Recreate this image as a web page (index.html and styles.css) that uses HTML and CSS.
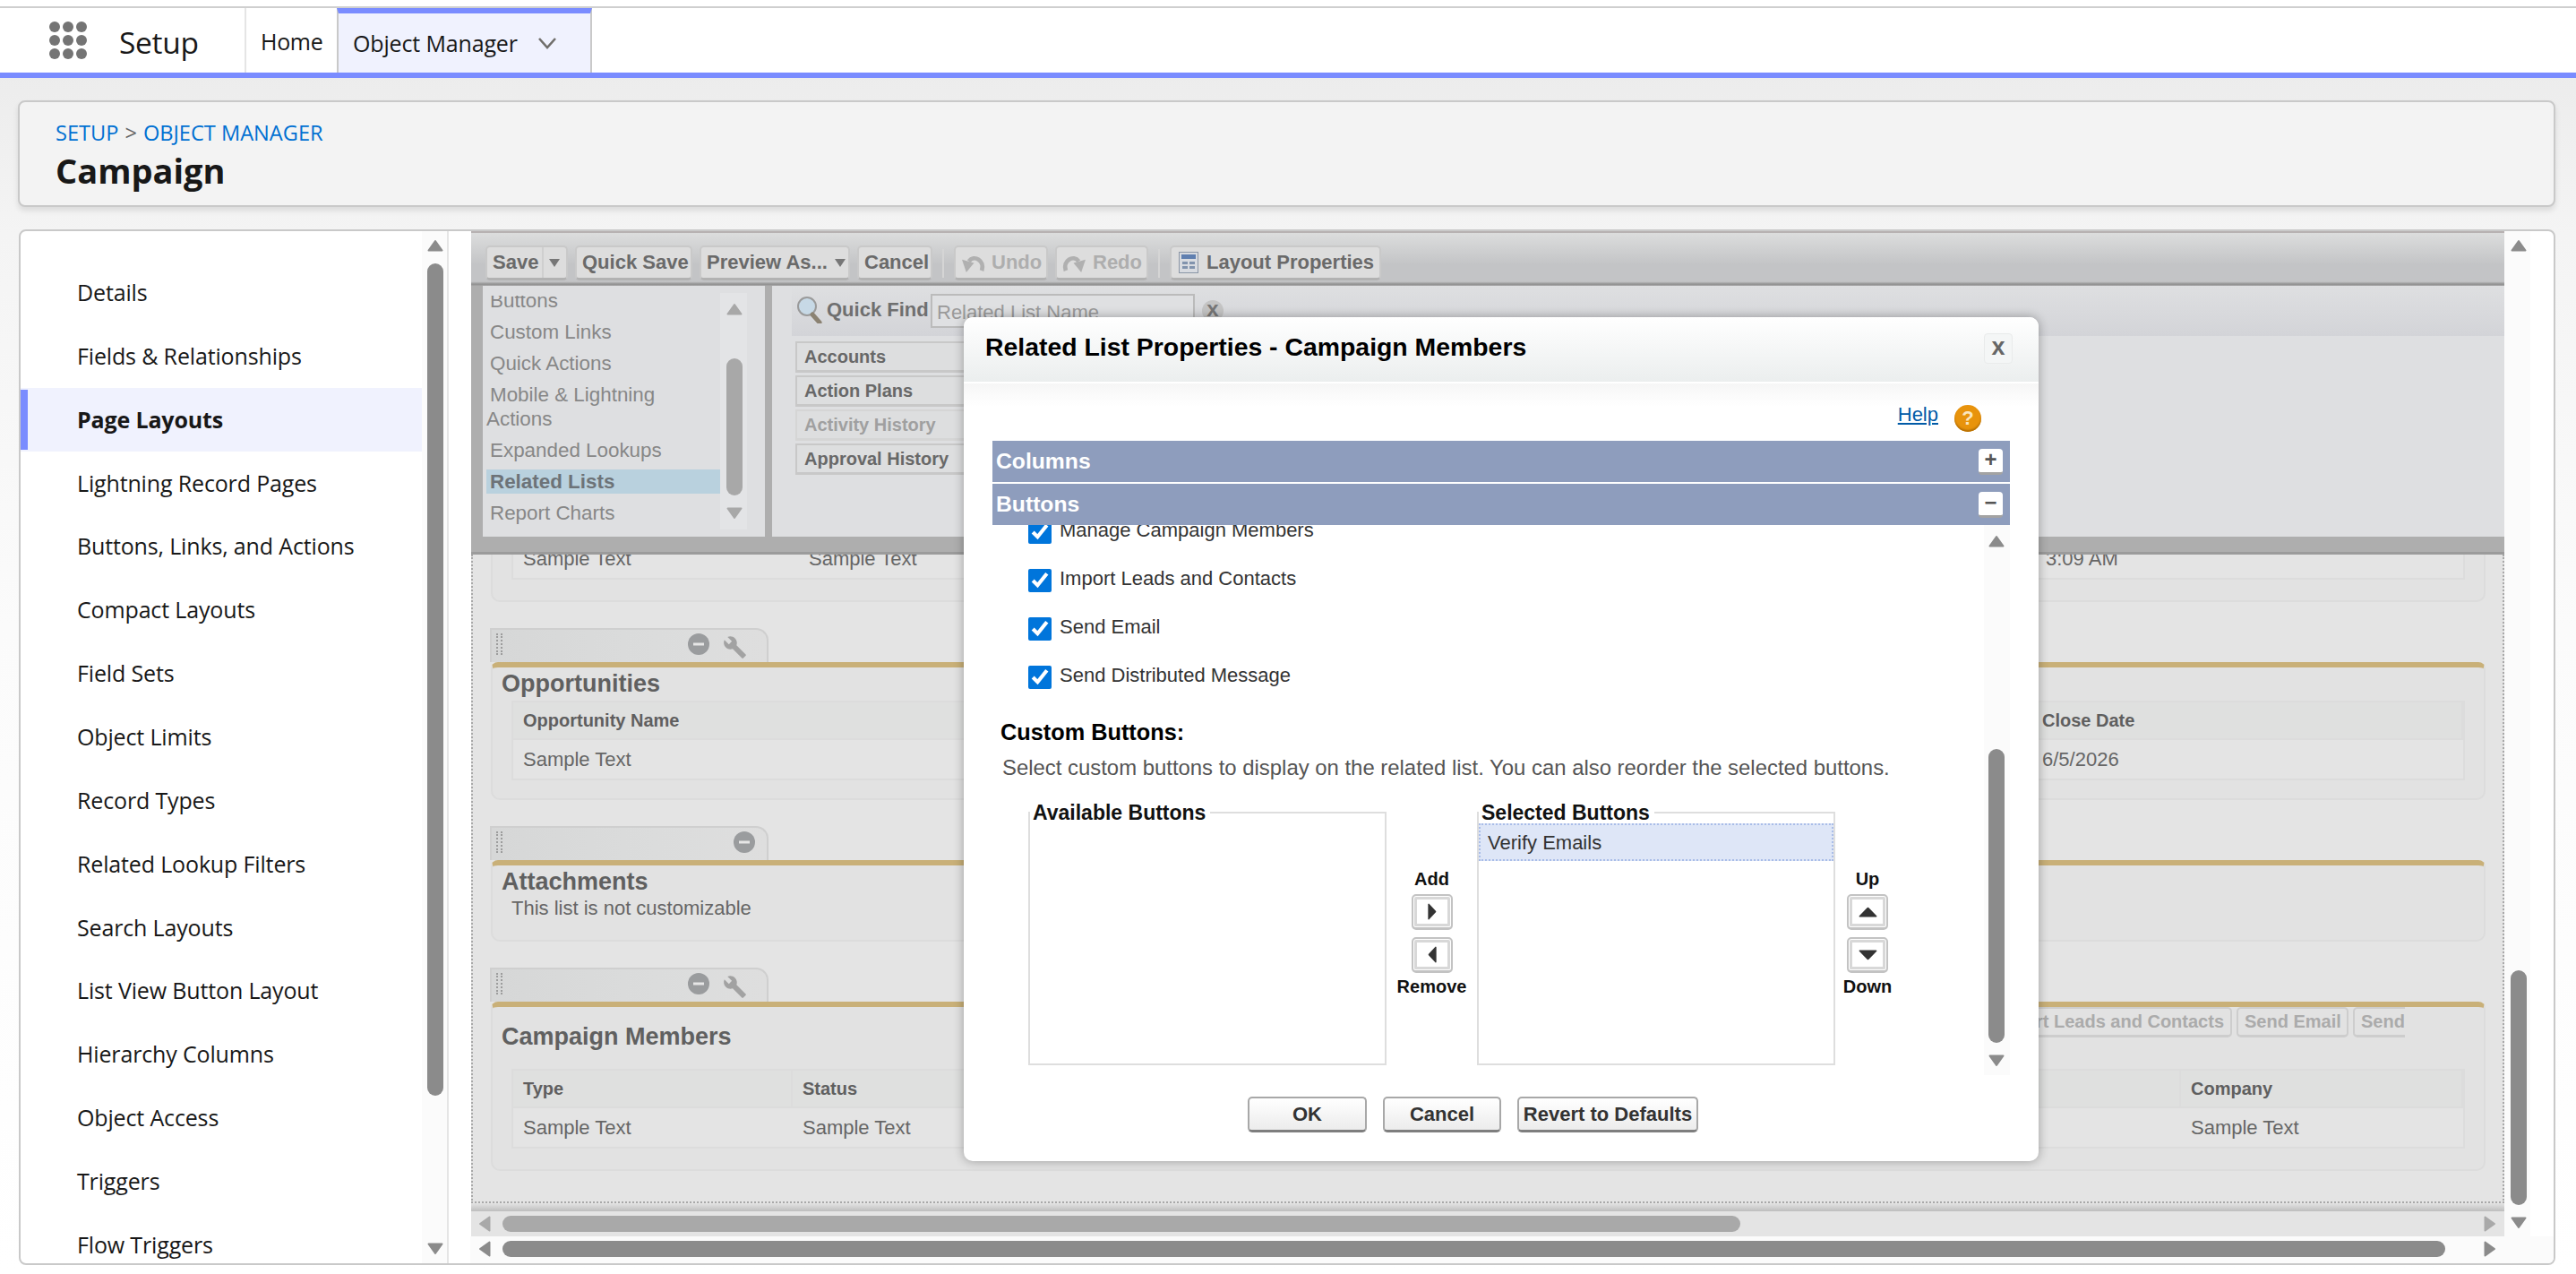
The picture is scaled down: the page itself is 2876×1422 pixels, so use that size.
FILE: index.html
```html
<!DOCTYPE html>
<html lang="en">
<head>
<meta charset="utf-8">
<title>Campaign | Object Manager</title>
<link rel="stylesheet" href="styles.css">
</head>
<body>
<svg class="sprite" width="0" height="0" aria-hidden="true">
  <symbol id="up" viewBox="0 0 18 14" preserveAspectRatio="none"><path d="M9 2 16.5 12.5H1.5Z" fill="currentColor" stroke="currentColor" stroke-width="2" stroke-linejoin="round"/></symbol>
  <symbol id="down" viewBox="0 0 18 14" preserveAspectRatio="none"><path d="M1.5 1.5H16.5L9 12Z" fill="currentColor" stroke="currentColor" stroke-width="2" stroke-linejoin="round"/></symbol>
  <symbol id="left" viewBox="0 0 14 18" preserveAspectRatio="none"><path d="M12.5 1.5V16.5L2 9Z" fill="currentColor" stroke="currentColor" stroke-width="2" stroke-linejoin="round"/></symbol>
  <symbol id="right" viewBox="0 0 14 18" preserveAspectRatio="none"><path d="M1.5 1.5V16.5L12 9Z" fill="currentColor" stroke="currentColor" stroke-width="2" stroke-linejoin="round"/></symbol>
  <symbol id="minus" viewBox="0 0 24 24"><circle cx="12" cy="12" r="12" fill="#9a9c9e"/><rect x="6" y="10.5" width="12" height="3" fill="#e6e6e6"/></symbol>
  <symbol id="wrench" viewBox="0 0 24 24"><path d="M22.7 19l-9.1-9.1c.9-2.3.4-5-1.5-6.9-2-2-5-2.4-7.4-1.3L9 6 6 9 1.6 4.7C.4 7.1.9 10.1 2.9 12.1c1.9 1.9 4.6 2.4 6.9 1.5l9.1 9.1c.4.4 1 .4 1.4 0l2.3-2.3c.5-.4.5-1.1.1-1.4z" fill="#a2a2a2"/></symbol>
</svg>

<div class="topline"></div>
<nav class="nav">
  <div class="waffle" aria-hidden="true"><i></i><i></i><i></i><i></i><i></i><i></i><i></i><i></i><i></i></div>
  <div class="app">Setup</div>
  <a class="navtab home">Home</a>
  <a class="navtab active">Object Manager
    <svg class="chev" viewBox="0 0 22 14"><path d="M2 2 11 12 20 2" fill="none" stroke="#706e6b" stroke-width="2.6"/></svg>
  </a>
</nav>

<main class="page">
  <header class="head">
    <div class="crumb"><a>SETUP</a><span class="gt">&gt;</span><a>OBJECT MANAGER</a></div>
    <h1>Campaign</h1>
  </header>

  <section class="card">
    <aside class="side">
      <ul class="menu">
        <li>Details</li>
        <li>Fields &amp; Relationships</li>
        <li class="sel">Page Layouts</li>
        <li>Lightning Record Pages</li>
        <li>Buttons, Links, and Actions</li>
        <li>Compact Layouts</li>
        <li>Field Sets</li>
        <li>Object Limits</li>
        <li>Record Types</li>
        <li>Related Lookup Filters</li>
        <li>Search Layouts</li>
        <li>List View Button Layout</li>
        <li>Hierarchy Columns</li>
        <li>Object Access</li>
        <li>Triggers</li>
        <li>Flow Triggers</li>
      </ul>
      <div class="vbar sidebar-bar">
        <svg class="arr"><use href="#up"/></svg>
        <div class="thumb"></div>
        <svg class="arr"><use href="#down"/></svg>
      </div>
    </aside>

    <div class="content">
      <div class="content-top">
        <div class="frame">
          <div class="toolbar">
            <button class="tb split">Save<span class="caret-box"><span class="caret"></span></span></button>
            <button class="tb b-qs">Quick Save</button>
            <button class="tb b-pv">Preview As...<span class="caret"></span></button>
            <button class="tb b-cn">Cancel</button>
            <span class="tsep"></span>
            <button class="tb off b-un">
              <svg class="ticon" viewBox="0 0 28 24"><path d="M24 21C28 9 15 2 9 10" fill="none" stroke="#b0b0b0" stroke-width="5"/><path d="M1 8 15 12 6 23Z" fill="#b0b0b0"/></svg>Undo</button>
            <button class="tb off b-re">
              <svg class="ticon" viewBox="0 0 28 24"><path d="M4 21C0 9 13 2 19 10" fill="none" stroke="#b0b0b0" stroke-width="5"/><path d="M27 8 13 12 22 23Z" fill="#b0b0b0"/></svg>Redo</button>
            <span class="tsep"></span>
            <button class="tb b-lp">
              <svg class="ticon lp" viewBox="0 0 22 24"><rect x=".5" y=".5" width="21" height="23" fill="#d8dbe0" stroke="#8b96a6"/><rect x="3" y="3" width="16" height="5" fill="#5f7fb0"/><path d="M4 11h6v3H4zM12 11h6v3h-6zM4 16h6v3H4zM12 16h6v3h-6z" fill="#8193ad"/></svg>Layout Properties</button>
          </div>

          <div class="palette">
            <div class="pal-left">
              <ul class="pal-list">
                <li>Buttons</li>
                <li>Custom Links</li>
                <li>Quick Actions</li>
                <li>Mobile &amp; Lightning Actions</li>
                <li>Expanded Lookups</li>
                <li class="cur">Related Lists</li>
                <li>Report Charts</li>
              </ul>
              <div class="vbar pal-bar">
                <svg class="arr"><use href="#up"/></svg>
                <div class="thumb"></div>
                <svg class="arr"><use href="#down"/></svg>
              </div>
            </div>
            <div class="pal-right">
              <div class="qf">
                <svg class="glass" viewBox="0 0 31 30"><circle cx="12" cy="11" r="10" fill="#c7d9e6" stroke="#9a9a9a" stroke-width="2"/><path d="M18 20 26 29" stroke="#8b8272" stroke-width="5" stroke-linecap="round"/></svg>
                <span class="qf-l">Quick Find</span>
                <input class="qf-i" placeholder="Related List Name" aria-label="Quick Find">
                <span class="qf-x">x</span>
              </div>
              <div class="pal-items">
                <div class="pi">Accounts</div>
                <div class="pi">Action Plans</div>
                <div class="pi dis">Activity History</div>
                <div class="pi">Approval History</div>
              </div>
            </div>
          </div>
          <div class="pal-shadow"></div>

          <div class="canvas">
            <div class="rl first">
              <div class="rl-body">
                <div class="tbl cols-a">
                  <div class="td">Sample Text</div><div class="td">Sample Text</div><div class="td">3:09 AM</div>
                </div>
              </div>
            </div>

            <div class="rl">
              <div class="rl-tab"><span class="grip"></span><svg class="ti"><use href="#minus"/></svg><svg class="ti wr"><use href="#wrench"/></svg></div>
              <div class="rl-body">
                <div class="rl-title t-op">Opportunities</div>
                <div class="tbl cols-o">
                  <div class="th">Opportunity Name</div><div class="th">Close Date</div>
                  <div class="td">Sample Text</div><div class="td">6/5/2026</div>
                </div>
              </div>
            </div>

            <div class="rl">
              <div class="rl-tab"><span class="grip"></span><svg class="ti solo"><use href="#minus"/></svg></div>
              <div class="rl-body at">
                <div class="rl-title t-op">Attachments</div>
                <p class="note">This list is not customizable</p>
              </div>
            </div>

            <div class="rl">
              <div class="rl-tab"><span class="grip"></span><svg class="ti"><use href="#minus"/></svg><svg class="ti wr"><use href="#wrench"/></svg></div>
              <div class="rl-body">
                <div class="rl-head">
                  <div class="rl-title">Campaign Members</div>
                  <div class="rl-btns">
                    <span class="gb g-imp">Import Leads and Contacts</span>
                    <span class="gb g-se">Send Email</span>
                    <span class="gb g-sd">Send Distributed Message</span>
                  </div>
                </div>
                <div class="tbl cols-c">
                  <div class="th">Type</div><div class="th">Status</div><div class="th">Company</div>
                  <div class="td">Sample Text</div><div class="td">Sample Text</div><div class="td">Sample Text</div>
                </div>
              </div>
            </div>
          </div>
          <div class="canvas-shade"></div>
          <div class="hbar inner">
            <svg class="arh"><use href="#left"/></svg>
            <div class="hthumb"></div>
            <svg class="arh"><use href="#right"/></svg>
          </div>

          <div class="dialog" role="dialog" aria-label="Related List Properties - Campaign Members">
            <div class="dlg-head">
              <h2>Related List Properties - Campaign Members</h2>
              <span class="dlg-x">x</span>
            </div>
            <div class="dlg-help">
              <a class="help">Help</a>
              <span class="helpicon">?</span>
            </div>
            <div class="bar">Columns<span class="tog">+</span></div>
            <div class="bar b2">Buttons<span class="tog">&minus;</span></div>
            <div class="dlg-scroll">
              <div class="dlg-main">
                <label class="chk"><input type="checkbox" checked>Manage Campaign Members</label>
                <label class="chk"><input type="checkbox" checked>Import Leads and Contacts</label>
                <label class="chk"><input type="checkbox" checked>Send Email</label>
                <label class="chk"><input type="checkbox" checked>Send Distributed Message</label>
                <h3>Custom Buttons:</h3>
                <p class="desc">Select custom buttons to display on the related list. You can also reorder the selected buttons.</p>
                <div class="duel">
                  <fieldset class="fs"><legend>Available Buttons</legend></fieldset>
                  <div class="mid">
                    <span class="ml">Add</span>
                    <span class="mb"><svg class="mi-h"><use href="#right"/></svg></span>
                    <span class="mb"><svg class="mi-h"><use href="#left"/></svg></span>
                    <span class="ml">Remove</span>
                  </div>
                  <fieldset class="fs"><legend>Selected Buttons</legend><div class="opt">Verify Emails</div></fieldset>
                  <div class="mid last">
                    <span class="ml">Up</span>
                    <span class="mb"><svg class="mi-v"><use href="#up"/></svg></span>
                    <span class="mb"><svg class="mi-v"><use href="#down"/></svg></span>
                    <span class="ml">Down</span>
                  </div>
                </div>
              </div>
              <div class="vbar dlg-bar">
                <svg class="arr"><use href="#up"/></svg>
                <div class="thumb"></div>
                <svg class="arr"><use href="#down"/></svg>
              </div>
            </div>
            <div class="dlg-foot">
              <button class="fb f-ok">OK</button>
              <button class="fb f-cn">Cancel</button>
              <button class="fb f-rv">Revert to Defaults</button>
            </div>
          </div>
        </div>

        <div class="vbar main-bar">
          <svg class="arr"><use href="#up"/></svg>
          <div class="thumb"></div>
          <svg class="arr"><use href="#down"/></svg>
        </div>
      </div>
      <div class="hbar outer">
        <svg class="arh"><use href="#left"/></svg>
        <div class="hthumb"></div>
        <svg class="arh"><use href="#right"/></svg>
      </div>
    </div>
  </section>
</main>
</body>
</html>
```

FILE: styles.css
```css
* { box-sizing: border-box; }
html, body { margin: 0; height: 1422px; overflow: hidden; }
body {
  background: linear-gradient(#ececec 80px, #f4f4f4 260px, #fbfbfb 700px, #ffffff);
  font-family: "Liberation Sans", Arial, sans-serif;
  color: #181818;
}
.sprite { position: absolute; }
ul { list-style: none; margin: 0; padding: 0; }
button { font-family: inherit; margin: 0; }
h1, h2, h3, p { margin: 0; }

/* top nav */
.topline { height: 9px; background: #fff; border-bottom: 2px solid #cfcfcf; margin-top: 0; }
.nav {
  height: 78px; background: #fff; border-bottom: 6px solid #7a8cff;
  display: flex; align-items: stretch;
  font-family: "Open Sans", "Noto Sans", sans-serif;
}
.waffle {
  width: 42px; height: 42px; margin: 15px 0 0 55px;
  display: grid; grid-template-columns: repeat(3, 12px); grid-template-rows: repeat(3, 12px); gap: 3px;
}
.waffle i { background: #747474; border-radius: 50%; }
.app { width: 140px; margin-left: 36px; font-size: 33.5px; line-height: 76px; letter-spacing: -.3px; }
.navtab {
  display: flex; align-items: center; font-size: 25px; letter-spacing: -.15px;
  padding: 0 0 0 16px; border-left: 2px solid #e5e5e5; width: 103px;
}
.navtab.home { padding-top: 1px; letter-spacing: -.3px; }
.navtab.active {
  width: 285px; background: #f0f2fe; border: 2px solid #c9c9c9; border-width: 0 2px;
  border-top: 6px solid #7a8cff; padding: 0 37px 0 16px;
}
.chev { width: 22px; height: 14px; margin-left: auto; }

/* page */
.page { padding: 25px 23px 0 20px; }
.head {
  height: 119px; background: #f3f3f3; border: 2px solid #c9c9c9; border-radius: 8px;
  box-shadow: 0 4px 6px rgba(0,0,0,.1); padding: 19px 0 0 40px;
  font-family: "Open Sans", "Noto Sans", sans-serif;
}
.crumb { font-size: 23.6px; line-height: 30px; color: #0070d2; }
.gt { color: #666; margin: 0 7px; }
h1 { font-size: 38px; line-height: 48px; font-weight: 700; margin-top: 3px; }

.card {
  height: 1156px; margin: 25px 0 0 1px; background: #fff;
  border: 2px solid #c9c9c9; border-radius: 8px; display: flex; overflow: hidden;
}

/* sidebar */
.side { width: 478px; display: flex; flex: none; }
.menu {
  width: 448px; padding-top: 33px; overflow: hidden;
  font-family: "Open Sans", "Noto Sans", sans-serif; font-size: 25px; letter-spacing: -.15px; color: #181818;
}
.menu li { height: 70.87px; line-height: 71px; padding-left: 63px; }
.menu .sel { background: #f0f2fe; font-weight: 700; position: relative; }
.menu .sel::before { content: ""; position: absolute; left: 0; top: 2px; bottom: 2px; width: 8px; background: #7a8cff; }

/* scrollbars */
.vbar { display: flex; flex-direction: column; flex: none; width: 30px; background: #fbfbfb; padding-left: 6px; color: #8b8b8b; }
.arr { width: 18px; height: 14px; flex: none; display: block; }
.thumb { width: 18px; background: currentColor; border-radius: 9px; flex: none; }
.sidebar-bar { border-right: 2px solid #e5e5e5; padding-top: 9px; }
.sidebar-bar .thumb { height: 929px; margin: 13px 0; }
.sidebar-bar .arr:last-child { margin-top: 150px; }
.sidebar-bar .thumb { margin-bottom: 14px; }
.main-bar { width: 29px; padding: 9px 0 0 7px; }
.main-bar .thumb { height: 262px; margin: 802px 0 13px; }
.hbar { display: flex; align-items: center; flex: none; }
.arh { width: 14px; height: 18px; flex: none; display: block; }
.hthumb { height: 18px; border-radius: 9px; background: currentColor; flex: none; }
.hbar.outer { height: 30px; background: #fbfbfb; color: #8b8b8b; padding: 0 0 3px 9px; margin-left: 24px; }
.outer .hthumb { width: 2169px; margin: 0 43px 0 13px; }
.hbar.inner { height: 28px; background: #e4e4e4; color: #a9a9a9; padding: 0 0 0 8px; }
.inner .hthumb { width: 1382px; margin: 0 830px 0 13px; }

/* content */
.content { flex: 1; min-width: 0; display: flex; flex-direction: column; }
.content-top { display: flex; flex: 1; min-height: 0; padding-left: 25px; }
.frame { width: 2270px; flex: none; position: relative; display: flex; flex-direction: column; min-height: 0; }

.toolbar {
  height: 61px; flex: none; display: flex; align-items: flex-start; padding: 14px 0 0 16px;
  background: linear-gradient(#dcdddd, #c3c4c6 60%, #c3c4c6 92%, #8f8f8f 97%, #a8a8a8);
  border-top: 2px solid #b7b2b2;
}
.tb {
  height: 39px; border: 2px solid #c9c9c9; border-bottom: 3px solid #b2b2b2; border-radius: 5px;
  background: #dddddd; font-size: 22px; font-weight: 700; color: #6a6a6a; padding: 0 0 0 6px;
  display: flex; align-items: center; margin-right: 8px; text-align: left; white-space: nowrap; flex: none;
}
.split { width: 92px; position: relative; }
.b-qs { width: 131px; }
.b-pv { width: 168px; }
.b-cn { width: 84px; }
.b-un { width: 105px; }
.b-re { width: 104px; }
.b-lp { width: 236px; }
.off { color: #aeaeae; }
.caret { width: 0; height: 0; border: 6px solid transparent; border-top: 9px solid #777; border-bottom: 0; margin-left: 8px; }
.caret-box { height: 34px; margin-left: 4px; border-left: 2px solid #cfcfcf; display: flex; align-items: center; }
.caret-box .caret { margin-left: 6px; }
.tsep { width: 2px; height: 32px; background: #d5d5d5; margin: 4px 11px 0 3px; flex: none; }
.ticon { width: 27px; height: 23px; margin-right: 7px; flex: none; }
.ticon.lp { width: 22px; height: 24px; margin: 0 9px 0 2px; }

.palette { height: 280px; flex: none; display: flex; background: #aeaeae; padding: 0 0 0 13px; }
.pal-left { width: 315px; height: 280px; background: #dedfe1; display: flex; padding-top: 11px; flex: none; }
.pal-list {
  width: 265px; height: 261px; overflow: hidden; padding: 0 0 0 4px; font-size: 22.4px; color: #878787; line-height: 27px;
}
.pal-list li { margin-bottom: 8px; text-indent: 4px; }
.pal-list li:first-child { margin-top: -8px; }
.pal-list .cur { background: #b9d1de; color: #6d7378; font-weight: 700; }
.pal-bar { background: #e3e4e6; width: 30px; height: 264px; margin-top: -3px; color: #a8a8a8; padding: 11px 0 0 7px; margin-right: 20px; }
.pal-bar .thumb { height: 153px; margin: 48px 0 13px; color: #a8a8a8; }
.pal-right {
  flex: 1; margin-left: 8px; background: #dedfe1; padding-left: 22px; min-width: 0;
}
.qf {
  height: 56px; display: flex; align-items: flex-start; padding: 12px 0 0 5px;
  background: linear-gradient(#dedfe1, #d3d4d8);
}
.glass { width: 31px; height: 30px; flex: none; margin-right: 3px; }
.qf-l { font-size: 22px; font-weight: 700; color: #6f6f6f; line-height: 30px; margin-top: 0; width: 116px; }
.qf-i {
  width: 295px; height: 38px; margin-top: -3px; border: 2px solid #bbb; background: #dfe0e2; padding: 6px 5px 2px; font: 22px "Liberation Sans", sans-serif; color: #999;
}
.qf-i::placeholder { color: #9a9a9a; }
.qf-x {
  width: 24px; height: 24px; border-radius: 50%; background: #c4c4c4; color: #777; font-weight: 700; font-size: 24px; line-height: 20px;
  text-align: center; margin: 4px 0 0 8px;
}
.pal-items { padding: 6px 0 0 4px; }
.pi {
  width: 400px; height: 35px; margin-bottom: 3px; border: 2px solid #c8c8c8; border-bottom-width: 3px; background: #dddedf;
  font-size: 20px; font-weight: 700; color: #686868; line-height: 30px; padding-left: 8px;
}
.pi.dis { color: #a0a0a0; border-color: #d5d5d5; font-weight: 700; }
.pal-shadow { height: 20px; flex: none; background: linear-gradient(#aeaeae 17px, #9b9b9b 17px); }

/* canvas */
.canvas {
  flex: 1; min-height: 0; overflow: hidden; background: #e4e4e4;
  border-left: 2px dotted #a8a8a8; border-right: 2px dotted #a8a8a8; border-bottom: 2px dotted #a8a8a8;
  padding: 0 19px 0 19px; color: #606060;
}
.canvas-shade { height: 9px; flex: none; background: linear-gradient(#e4e4e4, #bdbdbd); }
.rl { margin-bottom: 29px; }
.rl-tab {
  width: 311px; height: 38px; display: flex; align-items: center; padding: 0 22px 4px 5px;
  background: linear-gradient(90deg, #d6d7d7, #dbdcdc 60%, #dedede); border: 2px solid #cfcfcf; border-bottom: 0; border-radius: 0 14px 0 0;
}
.grip { width: 7px; height: 24px; border-left: 2px dotted #9c9c9c; border-right: 2px dotted #9c9c9c; margin-right: auto; }
.ti { width: 24px; height: 24px; flex: none; }
.ti.wr { width: 27px; height: 27px; margin: 6px 0 0 15px; }
.ti.solo { margin-right: -9px; }
.rl-body {
  border: 2px solid #dcdcdc; border-top: 6px solid #c9b078; border-radius: 8px 8px 10px 10px; background: #e2e2e2;
  padding: 0 21px 22px 21px; margin-left: 1px; height: 154px;
}
.rl:nth-child(2) .rl-body { height: 154px; }
.rl.first { margin-top: -34px; }
.rl.first .rl-body { height: 87px; padding-top: 9px; border-top-color: transparent; }
.rl:nth-child(3) .rl-body { height: 91px; }
.rl:nth-child(4) .rl-body { height: 189px; }
.rl-title { font-size: 27px; font-weight: 700; color: #606060; margin-left: -11px; line-height: 30px; }
.t-op { margin-top: 3px; margin-bottom: 4px; }
.note { font-size: 22px; line-height: 26px; color: #666; margin-top: -2px; }
.tbl { display: grid; border: 2px solid #dcdcdc; background: #e4e4e4; font-size: 22px; }
.th, .td { padding: 0 11px; display: flex; align-items: center; white-space: nowrap; }
.th { height: 42px; background: #dfe0df; font-size: 20px; font-weight: 700; color: #5f5f5f; border-bottom: 2px solid #dcdcdc; border-right: 2px solid #dcdcdc; }
.td { height: 43px; color: #666; }
.cols-a { grid-template-columns: 319px 1fr 477px; }
.cols-o { grid-template-columns: 1fr 481px; }
.cols-c { grid-template-columns: 312px 1fr 315px; }
.rl-head { height: 69px; display: flex; position: relative; }
.rl-head .rl-title { line-height: 66px; }
.rl-btns { display: flex; width: 500px; margin-left: auto; margin-right: 67px; overflow: hidden; height: 34px; gap: 5px; flex: none; }
.gb {
  flex: none; height: 34px; border: 2px solid #cdcdcd; border-bottom-width: 3px; border-radius: 5px; font-size: 20px; font-weight: 700; color: #ababab;
  line-height: 29px; padding: 0 7px; white-space: nowrap; text-align: right;
}
.g-imp { width: 307px; }
.g-se { width: 125px; }
.g-sd { text-align: left; }

/* dialog */
.dialog {
  position: absolute; left: 550px; top: 96px; width: 1200px; height: 942px; background: #fff; border-radius: 10px;
  box-shadow: 0 0 12px rgba(0,0,0,.32); display: flex; flex-direction: column; color: #111;
}
.dlg-head {
  height: 72px; flex: none; display: flex; align-items: flex-start; justify-content: space-between; padding: 18px 29px 0 24px;
  background: linear-gradient(#fff, #ebeeee); border-radius: 10px 10px 0 0;
}
h2 { font-size: 28.4px; line-height: 30px; font-weight: 700; color: #000; }
.dlg-x {
  width: 32px; height: 34px; margin-top: 0; text-align: center; font-size: 27px; font-weight: 700; color: #666; line-height: 28px;
  background: #f4f6f6; border: 1px solid #e9ebeb; border-radius: 4px;
}
.dlg-help {
  height: 66px; flex: none; display: flex; justify-content: flex-end; align-items: flex-start; padding: 24px 64px 0 0;
  background: linear-gradient(#f6f6f6, #fff 40%); border-top: 2px solid #fff;
}
.help { font-size: 22px; color: #015ba7; text-decoration: underline; line-height: 26px; margin-top: -2px; }
.helpicon {
  width: 30px; height: 30px; border-radius: 50%; margin-left: 18px; background: #e8930c; color: #fbe6bf; font-weight: 700; font-size: 22px; text-align: center; line-height: 30px; box-shadow: inset 0 -2px 2px #b56f05;
}
.bar {
  height: 46px; flex: none; margin: 0 32px 0 32px; background: #8e9dbd; color: #fff; font-size: 24.7px; font-weight: 700;
  display: flex; align-items: center; justify-content: space-between; padding: 0 8px 0 4px;
}
.bar.b2 { margin-top: 2px; }
.tog {
  width: 27px; height: 29px; background: #fff; border-radius: 4px; border-bottom: 3px solid #a3a3a3; color: #555; font-size: 24px; line-height: 24px; text-align: center;
}
.dlg-scroll { height: 614px; flex: none; display: flex; margin: 0 32px; overflow: hidden; }
.dlg-main { flex: 1; min-width: 0; margin-top: -19px; color: #333; }
.chk { display: flex; align-items: center; height: 54px; padding: 0 0 4px 40px; font-size: 22px; color: #333; }
.chk input { width: 26px; height: 26px; margin: 4px 9px 0 0; flex: none; accent-color: #0075db; }
h3 { font-size: 25.3px; font-weight: 700; color: #000; line-height: 30px; margin: 19px 0 0 9px; }
.desc { font-size: 23.9px; line-height: 26px; color: #555; margin: 12px 0 0 11px; white-space: nowrap; }
.duel { display: flex; align-items: flex-start; margin: 36px 0 0 40px; }
.fs { width: 400px; height: 295px; padding: 0; margin: -12px 0 0; border: 2px solid #dedede; min-width: 0; }
.fs legend { padding: 0 5px 0 3px; font-size: 23px; font-weight: 700; color: #111; line-height: 26px; margin-left: 0; }
.opt {
  height: 42px; margin-top: -1px; background: #dee6f7; outline: 2px dotted #a9bde8; outline-offset: -2px; font-size: 22px; color: #333; line-height: 44px; padding-left: 10px;
}
.mid { width: 101px; flex: none; display: flex; flex-direction: column; align-items: center; padding-top: 62px; }
.mid.last { width: 72px; }
.ml { font-size: 20px; font-weight: 700; line-height: 26px; color: #111; }
.mb {
  width: 46px; height: 40px; margin: 4px 0; border: 2px solid #c3c3c3; border-bottom-width: 3px; border-radius: 5px; background: #fff; color: #333;
  display: flex; align-items: center; justify-content: center; box-shadow: inset 0 0 0 1px #fff, inset 0 0 0 4px #d8d8d8;
}
.mb + .ml { margin-top: -2px; }
.mi-h { width: 10px; height: 19px; }
.mi-v { width: 21px; height: 12px; }
.dlg-bar { width: 29px; padding: 11px 0 0 5px; margin-left: auto; }
.dlg-bar .thumb { height: 328px; margin: 225px 0 13px; }
.dlg-foot { flex: 1; display: flex; justify-content: center; gap: 18px; padding: 24px 63px 0 0; }
.fb {
  height: 40px; border: 2px solid #a8a8a8; border-bottom: 3px solid #7e7e7e; border-radius: 5px; background: linear-gradient(#fff, #ececec);
  font-size: 22px; font-weight: 700; color: #333; padding: 0;
}
.f-ok { width: 133px; }
.f-cn { width: 132px; }
.f-rv { width: 202px; }
```
